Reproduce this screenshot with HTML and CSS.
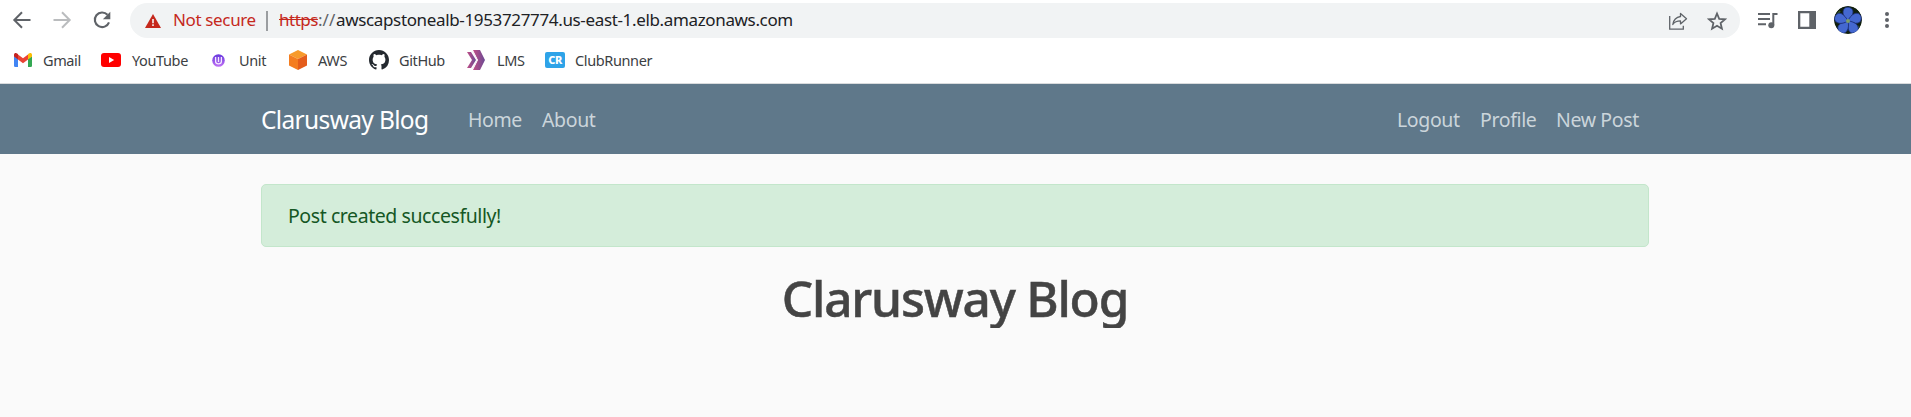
FILE: index.html
```html
<!DOCTYPE html>
<html lang="en">
<head>
<meta charset="utf-8">
<title>Clarusway Blog</title>
<link rel="stylesheet" href="styles.css">
</head>
<body>
<header class="browser">
  <div class="toolbar">
    <div class="controls">
      <svg class="icon" width="20" height="20" viewBox="0 0 20 20"><path d="M18.5 10H2.5M10 2.3 2.3 10l7.7 7.7" fill="none" stroke="#5f6368" stroke-width="2"/></svg>
      <svg class="icon" width="20" height="20" viewBox="0 0 20 20"><path d="M1.5 10h16M10 2.3l7.7 7.7-7.7 7.7" fill="none" stroke="#babcbe" stroke-width="2"/></svg>
      <svg class="icon" width="20" height="20" viewBox="0 0 20 20"><path d="M15.5 4.8A7.3 7.3 0 1 0 17 12.3" fill="none" stroke="#5f6368" stroke-width="2.1"/><path d="M18.3 1.8v7.4h-7.4z" fill="#5f6368"/></svg>
    </div>
    <div class="omnibox">
      <svg class="warning" width="16" height="14" viewBox="0 0 16 14"><path d="M8 0l8 14H0z" fill="#c5281c"/><path d="M8 5v4.2M8 10.3V12" stroke="#f1f3f4" stroke-width="1.6"/></svg>
      <span class="insecure">Not secure</span>
      <span class="divider"></span>
      <span class="scheme">https</span><span class="slashes">://</span><span class="host">awscapstonealb-1953727774.us-east-1.elb.amazonaws.com</span>
      <svg class="share" width="20" height="20" viewBox="0 0 20 20"><path d="M1.700 5v13.200h13.600v-3.500" fill="none" stroke="#5f6368" stroke-width="1.300"/><path d="M12.500 2.500l6 5.200-6 5.200v-3c-3.700 0-6 1-7.700 3.600.7-4.300 3-7.300 7.700-8z" fill="none" stroke="#5f6368" stroke-width="1.300" stroke-linejoin="round"/></svg>
      <svg class="star" width="20" height="20" viewBox="0 0 20 20"><path d="M10 2.500l2.200 5.300 5.700.5-4.300 3.800 1.300 5.600L10 14.700l-4.900 3 1.300-5.600-4.300-3.800 5.700-.5z" fill="none" stroke="#5f6368" stroke-width="1.800"/></svg>
    </div>
    <div class="actions">
      <svg class="icon" width="20" height="20" viewBox="0 0 20 20"><path d="M0 4h12M0 9h12M0 14.300h8" stroke="#5f6368" stroke-width="2"/><path d="M15.300 15V4h4.200" fill="none" stroke="#5f6368" stroke-width="2"/><circle cx="13.300" cy="15.200" r="3" fill="#5f6368"/></svg>
      <svg class="icon panel" width="18" height="18" viewBox="0 0 18 18"><path d="M0 0h18v18H0zM2.300 2.300v13.400h9V2.300z" fill="#5f6368" fill-rule="evenodd"/></svg>
      <svg class="avatar" width="28" height="28" viewBox="0 0 28 28"><circle cx="14" cy="14" r="14" fill="#11200f"/><path d="M2 10l4-5M21 25l4-5M5 24l5 2M24 7l2 6" stroke="#35522c" stroke-width="2"/><g fill="#4468d0" stroke="#1d3076" stroke-width=".8"><path id="petal" d="M14 15C8 10 8 4 11 2c3-2 8 0 8 4 0 3-3 7-5 9z"/><use href="#petal" transform="rotate(72 14 15)"/><use href="#petal" transform="rotate(144 14 15)"/><use href="#petal" transform="rotate(216 14 15)"/><use href="#petal" transform="rotate(288 14 15)"/></g><circle cx="14" cy="15" r="2" fill="#7d9e69"/></svg>
      <svg class="dots" width="4" height="18" viewBox="0 0 4 18"><g fill="#5f6368"><circle cx="2" cy="3" r="2"/><circle cx="2" cy="9" r="2"/><circle cx="2" cy="15" r="2"/></g></svg>
    </div>
  </div>
  <nav class="bookmarks">
    <a class="bookmark gmail"><svg width="18" height="14" viewBox="0 0 18 14"><path d="M0 3l4 3v8H1.300Q0 14 0 12.700z" fill="#4285f4"/><path d="M14 6l4-3v9.700q0 1.300-1.300 1.300H14z" fill="#34a853"/><path d="M4 1.500l5 3.800 5-3.800v5L9 10.200 4 6.500z" fill="#ea4335"/><path d="M0 2C0 0 2 -.5 3.500.8L4 1.200v5.300L0 3.500z" fill="#c5221f"/><path d="M18 2c0-2-2-2.500-3.500-1.200l-.5.400v5.300l4-3z" fill="#fbbc04"/></svg><span>Gmail</span></a>
    <a class="bookmark youtube"><svg width="20" height="14" viewBox="0 0 20 14"><rect width="20" height="14" rx="3" fill="#f00"/><path d="M8 4l5.200 3L8 10z" fill="#fff"/></svg><span>YouTube</span></a>
    <a class="bookmark unit"><svg width="13" height="13" viewBox="0 0 13 13"><defs><linearGradient id="violet" x2="0" y2="1"><stop stop-color="#6638dd"/><stop offset="1" stop-color="#c070f5"/></linearGradient></defs><circle cx="6.500" cy="6.500" r="6.300" fill="url(#violet)"/><path d="M3.600 3v4.500q0 2.300 2.900 2.300t2.900-2.300V3M6.500 3v5" fill="none" stroke="#f4eaff" stroke-width="1.300"/></svg><span>Unit</span></a>
    <a class="bookmark aws"><svg width="18" height="20" viewBox="0 0 18 20"><path d="M9 0l9 4.500L9 9 0 4.500z" fill="#f79a2b"/><path d="M0 4.500L9 9v11l-9-4.500z" fill="#f47d20"/><path d="M18 4.500L9 9v11l9-4.500z" fill="#e45d1c"/></svg><span>AWS</span></a>
    <a class="bookmark github"><svg width="20" height="20" viewBox="0 0 16 16"><path fill="#24292f" d="M8 0C3.580 0 0 3.580 0 8c0 3.540 2.290 6.530 5.470 7.590.4.070.55-.17.55-.38 0-.19-.01-.82-.01-1.490-2.010.37-2.530-.49-2.690-.94-.09-.23-.48-.94-.82-1.130-.28-.15-.68-.52-.01-.53.63-.01 1.080.58 1.230.82.72 1.210 1.870.87 2.330.66.07-.52.28-.87.51-1.070-1.780-.2-3.640-.89-3.640-3.950 0-.87.31-1.590.82-2.150-.08-.2-.36-1.020.08-2.120 0 0 .67-.21 2.200.82.64-.18 1.320-.27 2-.27s1.360.09 2 .27c1.530-1.040 2.200-.82 2.200-.82.44 1.100.16 1.920.08 2.120.51.56.82 1.270.82 2.150 0 3.070-1.870 3.750-3.650 3.950.29.25.54.73.54 1.480 0 1.070-.01 1.930-.01 2.200 0 .21.15.46.55.38A8.010 8.010 0 0 0 16 8c0-4.420-3.580-8-8-8z"/></svg><span>GitHub</span></a>
    <a class="bookmark lms"><svg width="18" height="20" viewBox="0 0 18 20"><defs><linearGradient id="plum" x2="1"><stop stop-color="#c04e86"/><stop offset="1" stop-color="#6b4a94"/></linearGradient></defs><path d="M6 0h7l5 10-5 10H6l5-10z" fill="url(#plum)"/><path d="M0 2h4l5 8-5 8H0l5-8z" fill="url(#plum)"/><path d="M5.500 1l4.800 9-4.800 9" fill="none" stroke="#f8edf5" stroke-width="1"/></svg><span>LMS</span></a>
    <a class="bookmark club"><span class="club-logo">CR</span><span>ClubRunner</span></a>
  </nav>
</header>
<nav class="navbar">
  <div class="container nav-row">
    <a class="brand">Clarusway Blog</a>
    <a class="link home">Home</a>
    <a class="link about">About</a>
    <a class="link logout">Logout</a>
    <a class="link profile">Profile</a>
    <a class="link new-post">New Post</a>
  </div>
</nav>
<main class="container">
  <div class="alert"><span>Post created succesfully!</span></div>
  <h1 class="title"><span>Clarusway Blog</span></h1>
</main>
</body>
</html>
```
FILE: styles.css
```css
* { box-sizing: border-box; }
body { margin: 0; background: #fafafa; color: #444; font-family: "Noto Sans", "Open Sans", sans-serif; font-size: 19.5px; overflow: hidden; }
svg { display: block; flex: none; }
span, a { white-space: nowrap; }
.browser { height: 84px; background: #fff; border-bottom: 1px solid #d9dbdd; }
.toolbar { display: flex; padding-top: 3px; height: 38px; }
.controls { display: flex; align-items: center; gap: 20px; width: 130px; height: 34px; padding-left: 12px; }
.omnibox { display: flex; align-items: center; width: 1610px; height: 35px; padding-left: 15px; border-radius: 18px; background: #f1f3f4; font-size: 17px; line-height: 22px; color: #202124; }
.omnibox span:not(.divider) { padding-bottom: 1px; }
.warning { margin-right: 12px; }
.insecure { width: 93px; color: #c5281c; letter-spacing: -.36px; }
.divider { width: 2px; height: 20px; margin-right: 11px; background: #9a9da0; }
.scheme { width: 39px; color: #c5281c; text-decoration: line-through; letter-spacing: -.5px; }
.slashes { width: 18px; color: #5f6368; }
.host { width: 1332px; letter-spacing: -.35px; }
.share { margin-right: 19px; }
.actions { display: flex; align-items: center; height: 34px; padding-left: 18px; }
.panel { margin-left: 20px; }
.avatar { margin-left: 18px; border-radius: 50%; }
.dots { margin-left: 23px; }
.bookmarks { display: flex; height: 42px; padding: 3px 0 0 14px; color: #3c4043; font-size: 14.5px; line-height: 20px; letter-spacing: -.38px; }
.bookmark { display: flex; align-items: center; height: 38px; }
.bookmark svg { margin-right: 11px; }
.bookmark.gmail { width: 87px; }
.youtube { width: 111px; }
.unit { width: 77px; }
.unit svg { margin-right: 14px; }
.aws { width: 80px; }
.github { width: 98px; }
.github svg { margin-right: 10px; }
.lms { width: 78px; }
.lms svg { margin-right: 12px; }
.club-logo { width: 20px; height: 16px; margin-right: 10px; border-radius: 2px; background: #2ea3e8; color: #fff; font-size: 11px; font-weight: 800; line-height: 16px; text-align: center; }
.navbar { height: 70px; background: #5f788a; }
.container { width: 1388px; margin: 0 0 0 261px; }
.nav-row { display: flex; align-items: center; height: 70px; padding-top: 1px; }
.brand { width: 207px; color: #fff; font-size: 24.5px; letter-spacing: -.65px; }
.link { color: #cbd5db; letter-spacing: -.37px; }
.home { width: 74px; }
.about { width: 855px; }
.logout { width: 83px; }
.profile { width: 76px; }
.alert { height: 63px; margin-top: 30px; padding: 16px 26px; border: 1px solid #c3e6cb; border-radius: 5px; background: #d4edda; color: #155724; line-height: 30px; letter-spacing: -.43px; }
.title { margin: 21px 0 0; font-size: 49.5px; font-weight: 500; line-height: 60px; text-align: center; letter-spacing: -1.2px; -webkit-text-stroke: .5px #444; }
```
